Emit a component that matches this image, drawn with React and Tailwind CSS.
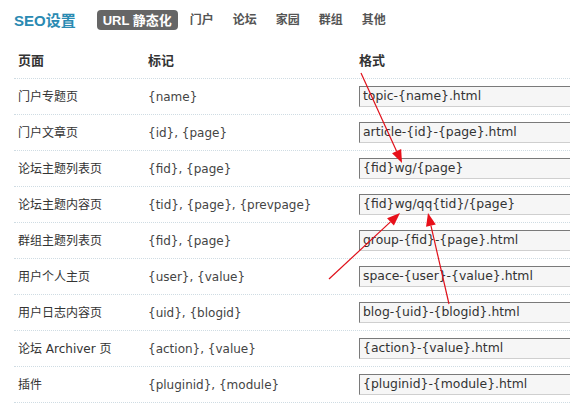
import React from "react";

const tabs = ["门户", "论坛", "家园", "群组", "其他"];

const rows = [
  { page: "门户专题页", mark: "{name}", format: "topic-{name}.html" },
  { page: "门户文章页", mark: "{id}, {page}", format: "article-{id}-{page}.html" },
  { page: "论坛主题列表页", mark: "{fid}, {page}", format: "{fid}wg/{page}" },
  { page: "论坛主题内容页", mark: "{tid}, {page}, {prevpage}", format: "{fid}wg/qq{tid}/{page}" },
  { page: "群组主题列表页", mark: "{fid}, {page}", format: "group-{fid}-{page}.html" },
  { page: "用户个人主页", mark: "{user}, {value}", format: "space-{user}-{value}.html" },
  { page: "用户日志内容页", mark: "{uid}, {blogid}", format: "blog-{uid}-{blogid}.html" },
  { page: "论坛 Archiver 页", mark: "{action}, {value}", format: "{action}-{value}.html" },
  { page: "插件", mark: "{pluginid}, {module}", format: "{pluginid}-{module}.html" },
];

// red annotation arrows drawn over the table
const arrows = [
  { x1: 361, y1: 73, x2: 402, y2: 163 },
  { x1: 329, y1: 279, x2: 400, y2: 213 },
  { x1: 449, y1: 304, x2: 428, y2: 213 },
];

const Arrow = ({ x1, y1, x2, y2 }) => {
  const len = Math.hypot(x2 - x1, y2 - y1);
  const ux = (x2 - x1) / len;
  const uy = (y2 - y1) / len;
  const head = 13;
  const half = 5;
  const bx = x2 - ux * head;
  const by = y2 - uy * head;
  const pts = `${x2},${y2} ${bx - uy * half},${by + ux * half} ${bx + uy * half},${by - ux * half}`;
  return (
    <>
      <line x1={x1} y1={y1} x2={bx} y2={by} stroke="#e0101a" strokeWidth="1.2" />
      <polygon points={pts} fill="#e8101a" />
    </>
  );
};

const App = () => {
  return (
    <div
      className="relative w-[570px] h-[406px] overflow-hidden bg-white text-[#333]"
      style={{ fontFamily: '"DejaVu Sans", "Noto Sans CJK SC", sans-serif' }}
    >
      <div className="flex items-center h-[20px] mt-[10px] pl-[14px]">
        <h1
          className="text-[15px] font-bold text-[#2a8ab2] leading-none"
          style={{ fontFamily: '"Liberation Sans", "Noto Sans CJK SC", sans-serif' }}
        >
          SEO设置
        </h1>
        <div className="ml-[21px] flex items-center h-[20px] px-[6px] rounded-[4px] bg-[#666] text-white text-[13px] font-bold leading-none"
          style={{ fontFamily: '"Liberation Sans", "Noto Sans CJK SC", sans-serif' }}
        >
          URL 静态化
        </div>
        <div className="ml-[12px] flex gap-[19px]">
          {tabs.map((t) => (
            <span key={t} className="text-[12px] font-bold text-[#555] leading-none">
              {t}
            </span>
          ))}
        </div>
      </div>

      <div className="ml-[14px] mt-[13px]">
        <div className="grid grid-cols-[130px_211px_1fr] items-center h-[36px] border-b border-dotted border-[#cfdce3] pl-[4px] text-[13px] font-bold text-[#333]">
          <span>页面</span>
          <span>标记</span>
          <span>格式</span>
        </div>
        {rows.map((r) => (
          <div
            key={r.page}
            className="grid grid-cols-[130px_211px_1fr] items-center h-[36px] border-b border-dotted border-[#cfdce3] pl-[4px] text-[12px]"
          >
            <span className="text-[#333]">{r.page}</span>
            <span className="text-[#444]">{r.mark}</span>
            <div className="h-[21px] w-[240px] flex items-center pl-[3px] bg-[#f6f6f6] border border-t-[#7a7a7a] border-l-[#7a7a7a] border-b-[#cfcfcf] border-r-[#cfcfcf] text-[12.4px] text-[#333] whitespace-nowrap">
              {r.format}
            </div>
          </div>
        ))}
      </div>

      <svg className="absolute inset-0 pointer-events-none" width="570" height="406">
        {arrows.map((a, i) => (
          <Arrow key={i} {...a} />
        ))}
      </svg>
    </div>
  );
};

export default App;
